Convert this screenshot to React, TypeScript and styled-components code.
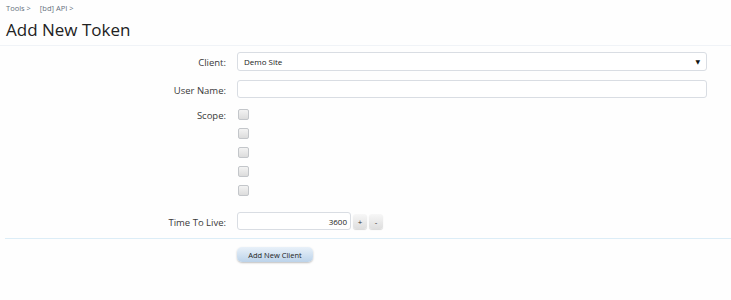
import React from 'react';
import styled, { createGlobalStyle } from 'styled-components';

const GlobalStyle = createGlobalStyle`
  html, body {
    margin: 0;
    padding: 0;
    background: #ffffff;
  }
  body {
    font-family: 'Open Sans', 'DejaVu Sans', sans-serif;
    color: #333;
  }
`;

const Page = styled.div`
  width: 731px;
  height: 300px;
  background: #fefefe;
  overflow: hidden;
`;

const Breadcrumb = styled.div`
  display: flex;
  gap: 9px;
  padding: 3px 0 0 6px;
  height: 11px;
  font-size: 7.5px;
  color: #65707d;
`;

const Title = styled.h1`
  margin: 0;
  padding: 4px 0 0 6px;
  height: 27px;
  font-family: 'Open Sans', sans-serif;
  font-weight: 400;
  font-size: 17px;
  line-height: 24px;
  color: #222;
  border-bottom: 1px solid #f0f3f7;
`;

const Form = styled.form`
  padding-top: 6px;
`;

const Row = styled.div<{ $h: number }>`
  display: flex;
  align-items: flex-start;
  min-height: ${(p) => p.$h}px;
`;

const Label = styled.label<{ $top?: number }>`
  width: 226px;
  padding-top: ${(p) => p.$top ?? 4}px;
  text-align: right;
  font-size: 9.5px;
  color: #3a3a3a;
  box-sizing: border-box;
`;

const Control = styled.div`
  margin-left: 11px;
  display: flex;
  align-items: center;
  gap: 2px;
`;

const TextBox = styled.div<{ $w: number; $h: number; $align?: string }>`
  width: ${(p) => p.$w}px;
  height: ${(p) => p.$h}px;
  box-sizing: border-box;
  border: 1px solid #d9dde3;
  border-radius: 3px;
  background: #fff;
  display: flex;
  align-items: center;
  justify-content: ${(p) => p.$align ?? 'space-between'};
  padding: 0 ${(p) => (p.$align ? 3 : 6)}px 0 6px;
  font-size: 8px;
  color: #222;
`;

const Arrow = styled.span`
  font-size: 6px;
  color: #111;
`;

const Checks = styled.div`
  display: flex;
  flex-direction: column;
  gap: 8px;
  padding-top: 1px;
`;

const Check = styled.span`
  display: block;
  width: 9px;
  height: 9px;
  margin-left: 1px;
  border: 1px solid #c3c6ca;
  border-radius: 2px;
  background: linear-gradient(#f3f3f3, #dcdcdc);
`;

const SpinBtn = styled.span`
  width: 14px;
  height: 15px;
  border-radius: 3px;
  background: linear-gradient(#f7f7f7, #dedede);
  box-shadow: 0 1px 1px rgba(0, 0, 0, 0.15);
  display: flex;
  align-items: center;
  justify-content: center;
  font-size: 8px;
  color: #333;
`;

const Separator = styled.div`
  margin: 0 0 0 5px;
  border-top: 1px solid #dcedf7;
`;

const SubmitRow = styled.div`
  display: flex;
  padding: 8px 0 0 237px;
`;

const SubmitButton = styled.span`
  display: flex;
  align-items: center;
  justify-content: center;
  width: 76px;
  height: 15px;
  border-radius: 5px;
  background: linear-gradient(#e9f1f9, #bcd3ea);
  box-shadow: 0 1px 2px rgba(0, 0, 0, 0.25);
  font-size: 7.5px;
  color: #222;
`;

export default function App() {
  return (
    <Page>
      <GlobalStyle />
      <Breadcrumb>
        <span>Tools &gt;</span>
        <span>[bd] API &gt;</span>
      </Breadcrumb>
      <Title>Add New Token</Title>
      <Form>
        <Row $h={28}>
          <Label>Client:</Label>
          <Control>
            <TextBox $w={470} $h={19}>
              <span>Demo Site</span>
              <Arrow>▼</Arrow>
            </TextBox>
          </Control>
        </Row>
        <Row $h={28}>
          <Label>User Name:</Label>
          <Control>
            <TextBox $w={470} $h={18} />
          </Control>
        </Row>
        <Row $h={104}>
          <Label $top={1}>Scope:</Label>
          <Control>
            <Checks>
              <Check />
              <Check />
              <Check />
              <Check />
              <Check />
            </Checks>
          </Control>
        </Row>
        <Row $h={26}>
          <Label>Time To Live:</Label>
          <Control>
            <TextBox $w={114} $h={18} $align="flex-end">
              <span>3600</span>
            </TextBox>
            <SpinBtn>+</SpinBtn>
            <SpinBtn>-</SpinBtn>
          </Control>
        </Row>
        <Separator />
        <SubmitRow>
          <SubmitButton>Add New Client</SubmitButton>
        </SubmitRow>
      </Form>
    </Page>
  );
}
